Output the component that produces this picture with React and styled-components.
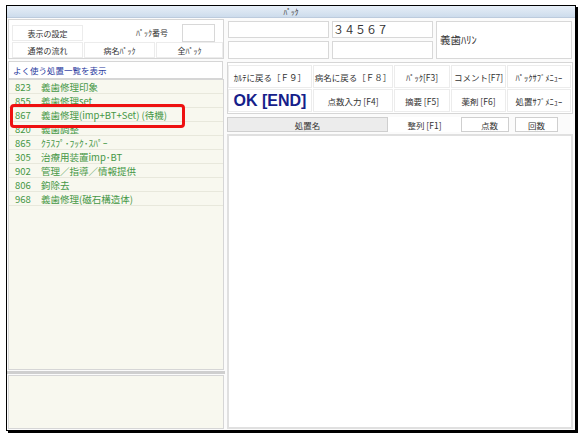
import React from "react";
import styled, { createGlobalStyle } from "styled-components";

const Global = createGlobalStyle`
  html, body { margin: 0; padding: 0; background: #ffffff; }
  body { font-family: "Noto Sans CJK JP", "Noto Sans", sans-serif; }
  * { box-sizing: border-box; }
`;

const Page = styled.div`
  width: 581px;
  height: 439px;
  padding: 5px 0 0 6px;
`;

const Window = styled.div`
  width: 570px;
  height: 426px;
  border: 1px solid #000;
  box-shadow: 2px 2px 0 #000;
  background: #fbfbfb;
  display: flex;
  flex-direction: column;
`;

const TitleBar = styled.div`
  height: 12px;
  background: linear-gradient(#e6eef7, #cddcec);
  border-bottom: 1px solid #bccbdd;
  font-size: 7.5px;
  line-height: 11px;
  text-align: center;
  color: #333;
`;

const Body = styled.div`
  flex: 1;
  display: flex;
  gap: 2px;
  padding: 1px 0 1px 0;
  min-height: 0;
`;

const LeftCol = styled.div`
  width: 218px;
  display: flex;
  flex-direction: column;
`;

const RightCol = styled.div`
  flex: 1;
  display: flex;
  flex-direction: column;
  padding-right: 2px;
`;

const TopBox = styled.div`
  height: 40px;
  margin: 0 1px;
  border: 1px solid #d6d6d6;
  background: #fff;
  display: grid;
  grid-template-columns: 71px 71px 1fr;
  grid-template-rows: 16px 16px;
  gap: 1px;
  padding: 5px 0 0 3px;
`;

const Btn = styled.div`
  border: 1px solid #ececec;
  background: #fff;
  font-size: 8px;
  color: #333;
  display: flex;
  align-items: center;
  justify-content: center;
  white-space: nowrap;
`;

const PackNoCell = styled.div`
  grid-column: 2 / 4;
  display: flex;
  align-items: center;
  justify-content: flex-end;
  gap: 14px;
  font-size: 8px;
  color: #333;
  padding-right: 8px;
  margin-top: -1px;
`;

const SmallInput = styled.div`
  width: 33px;
  height: 18px;
  border: 1px solid #d8d8d8;
  background: #fff;
`;

const ListHeader = styled.div`
  margin: 2px 2px 0 1px;
  height: 18px;
  border: 1px solid #d6d6d6;
  background: #fff;
  color: #2a3aa0;
  font-size: 8.5px;
  line-height: 16px;
  padding-left: 4px;
`;

const List = styled.div`
  position: relative;
  flex: 1;
  margin: 0 1px;
  border: 1px solid #d6d6d6;
  background: #f8f8ef;
`;

const Row = styled.div`
  height: 14px;
  display: flex;
  align-items: center;
  border-bottom: 1px solid #e8e8dc;
  color: #459745;
  font-size: 9.5px;
  white-space: nowrap;
`;

const Code = styled.span`
  width: 32px;
  padding-left: 6px;
`;

const Highlight = styled.div`
  position: absolute;
  left: 1px;
  top: 24px;
  width: 175px;
  height: 24px;
  border: 3px solid #ee1111;
  border-radius: 4px;
  pointer-events: none;
`;

const Splitter = styled.div`
  height: 3px;
  background: #cfcfcf;
  margin: 1px 0 1px 0;
`;

const BottomBox = styled.div`
  height: 54px;
  margin: 0 1px;
  border: 1px solid #d6d6d6;
  background: #f8f8ef;
`;

const InfoRow = styled.div`
  height: 40px;
  display: grid;
  grid-template-columns: 101px 101px 1fr;
  grid-template-rows: 17px 18px;
  gap: 3px 3px;
  padding: 2px 1px 0 1px;
`;

const Field = styled.div`
  grid-column: ${(p) => p.$col};
  grid-row: ${(p) => p.$row};
  border: 1px solid #d8d8d8;
  background: #fff;
  font-size: ${(p) => p.$size || 10}px;
  color: #333;
  line-height: 14px;
  padding-left: ${(p) => p.$pl ?? 3}px;
  display: flex;
  align-items: ${(p) => (p.$center ? "center" : "flex-start")};
`;

const ButtonGrid = styled.div`
  margin-top: 3px;
  height: 52px;
  border: 1px solid #d6d6d6;
  background: #fff;
  display: grid;
  grid-template-columns: 84px 80px 56px 55px 1fr;
  grid-template-rows: 23px 23px;
  gap: 1px;
  padding: 2px 1px 1px 0;
`;

const GridBtn = styled(Btn)`
  font-size: ${(p) => (p.$big ? 16 : 8.5)}px;
  font-weight: ${(p) => (p.$big ? 700 : 400)};
  color: ${(p) => (p.$big ? "#15208a" : "#333")};
  font-family: ${(p) =>
    p.$big ? '"Liberation Sans", "Noto Sans CJK JP", sans-serif' : "inherit"};
`;

const HeaderRow = styled.div`
  height: 15px;
  margin-top: 3px;
  display: flex;
  align-items: stretch;
`;

const ColHead = styled.div`
  width: ${(p) => p.$w}px;
  margin-right: ${(p) => p.$mr || 0}px;
  border: 1px solid ${(p) => (p.$plain ? "transparent" : "#cfcfcf")};
  background: ${(p) => (p.$gray ? "#ececec" : "#fff")};
  font-size: 8.5px;
  color: #333;
  display: flex;
  align-items: center;
  justify-content: ${(p) => p.$justify || "center"};
  padding-right: ${(p) => p.$pr || 0}px;
`;

const Table = styled.div`
  flex: 1;
  margin-top: 2px;
  border: 2px solid #e0e0e0;
  background: #fff;
`;

const rows = [
  ["823", "義歯修理印象"],
  ["855", "義歯修理set"],
  ["867", "義歯修理(imp+BT+Set) (待機)"],
  ["820", "義歯調整"],
  ["865", "ｸﾗｽﾌﾟ･ﾌｯｸ･ｽﾊﾟｰ"],
  ["305", "治療用装置imp･BT"],
  ["902", "管理／指導／情報提供"],
  ["806", "鉤除去"],
  ["968", "義歯修理(磁石構造体)"],
];

export default function App() {
  return (
    <Page>
      <Global />
      <Window>
        <TitleBar>ﾊﾟｯｸ</TitleBar>
        <Body>
          <LeftCol>
            <TopBox>
              <Btn>表示の設定</Btn>
              <PackNoCell>
                <span>ﾊﾟｯｸ番号</span>
                <SmallInput />
              </PackNoCell>
              <Btn>通常の流れ</Btn>
              <Btn>病名ﾊﾟｯｸ</Btn>
              <Btn>全ﾊﾟｯｸ</Btn>
            </TopBox>
            <ListHeader>よく使う処置一覧を表示</ListHeader>
            <List>
              {rows.map(([c, n]) => (
                <Row key={c}>
                  <Code>{c}</Code>
                  <span>{n}</span>
                </Row>
              ))}
              <Highlight />
            </List>
            <Splitter />
            <BottomBox />
          </LeftCol>
          <RightCol>
            <InfoRow>
              <Field $col="1" $row="1" />
              <Field $col="2" $row="1" $size={11} $pl={0}>３４５６７</Field>
              <Field $col="3" $row="1 / 3" $center $size={10.5}>義歯ﾊﾘﾝ</Field>
              <Field $col="1" $row="2" />
              <Field $col="2" $row="2" />
            </InfoRow>
            <ButtonGrid>
              <GridBtn>ｶﾙﾃに戻る［Ｆ９］</GridBtn>
              <GridBtn>病名に戻る［Ｆ８］</GridBtn>
              <GridBtn>ﾊﾟｯｸ[F3]</GridBtn>
              <GridBtn>コメント[F7]</GridBtn>
              <GridBtn>ﾊﾟｯｸｻﾌﾞﾒﾆｭｰ</GridBtn>
              <GridBtn $big>OK [END]</GridBtn>
              <GridBtn>点数入力 [F4]</GridBtn>
              <GridBtn>摘要 [F5]</GridBtn>
              <GridBtn>薬剤 [F6]</GridBtn>
              <GridBtn>処置ｻﾌﾞﾒﾆｭｰ</GridBtn>
            </ButtonGrid>
            <HeaderRow>
              <ColHead $w={161} $gray>処置名</ColHead>
              <ColHead $w={73} $plain>整列 [F1]</ColHead>
              <ColHead $w={48} $mr={6} $justify="flex-end" $pr={10}>点数</ColHead>
              <ColHead $w={43}>回数</ColHead>
            </HeaderRow>
            <Table />
          </RightCol>
        </Body>
      </Window>
    </Page>
  );
}
